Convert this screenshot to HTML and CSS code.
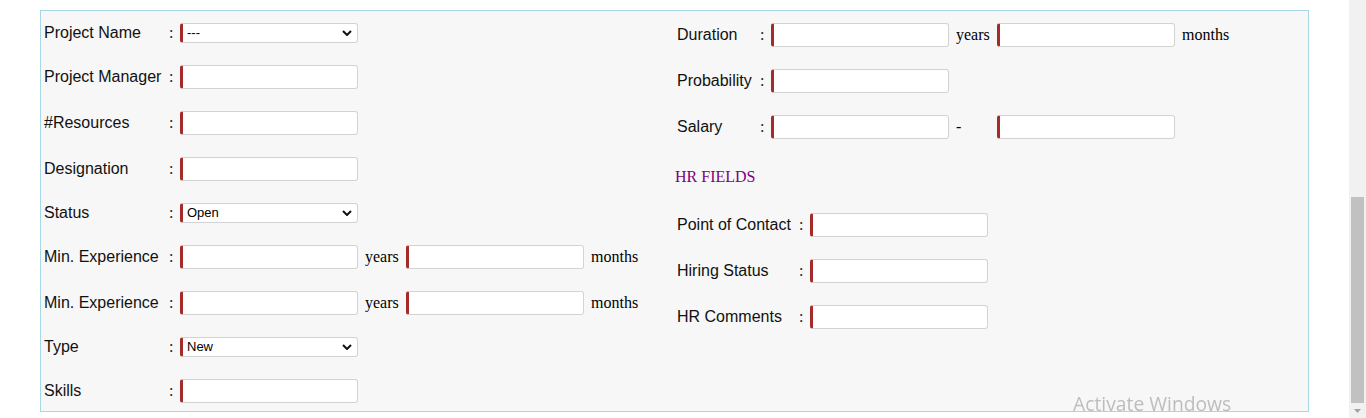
FILE: index.html
```html
<!DOCTYPE html>
<html>
<head>
<meta charset="utf-8">
<link rel="stylesheet" href="styles.css">
</head>
<body>
<div class="panel">
  <div class="col col-left">
    <div class="row r-sel">
      <span class="lbl">Project Name</span><span class="colon">:</span>
      <span class="ctl"><span class="sel-wrap"><select class="sel"><option>---</option></select><svg class="chev" viewBox="0 0 10 6" width="10" height="6"><path d="M1 1 L5 5 L9 1" fill="none" stroke="#111" stroke-width="2"/></svg></span></span>
    </div>
    <div class="row">
      <span class="lbl">Project Manager</span><span class="colon">:</span>
      <span class="ctl"><input class="inp" type="text"></span>
    </div>
    <div class="row">
      <span class="lbl">#Resources</span><span class="colon">:</span>
      <span class="ctl"><input class="inp" type="text"></span>
    </div>
    <div class="row">
      <span class="lbl">Designation</span><span class="colon">:</span>
      <span class="ctl"><input class="inp" type="text"></span>
    </div>
    <div class="row r-sel">
      <span class="lbl">Status</span><span class="colon">:</span>
      <span class="ctl"><span class="sel-wrap"><select class="sel"><option>Open</option></select><svg class="chev" viewBox="0 0 10 6" width="10" height="6"><path d="M1 1 L5 5 L9 1" fill="none" stroke="#111" stroke-width="2"/></svg></span></span>
    </div>
    <div class="row">
      <span class="lbl">Min. Experience</span><span class="colon">:</span>
      <span class="ctl"><input class="inp" type="text"><span class="unit">years</span><input class="inp" type="text"><span class="unit">months</span></span>
    </div>
    <div class="row">
      <span class="lbl">Min. Experience</span><span class="colon">:</span>
      <span class="ctl"><input class="inp" type="text"><span class="unit">years</span><input class="inp" type="text"><span class="unit">months</span></span>
    </div>
    <div class="row r-sel">
      <span class="lbl">Type</span><span class="colon">:</span>
      <span class="ctl"><span class="sel-wrap"><select class="sel"><option>New</option></select><svg class="chev" viewBox="0 0 10 6" width="10" height="6"><path d="M1 1 L5 5 L9 1" fill="none" stroke="#111" stroke-width="2"/></svg></span></span>
    </div>
    <div class="row">
      <span class="lbl">Skills</span><span class="colon">:</span>
      <span class="ctl"><input class="inp" type="text"></span>
    </div>
  </div>
  <div class="col col-right">
    <div class="row rr">
      <span class="lbl">Duration</span><span class="colon">:</span>
      <span class="ctl"><input class="inp" type="text"><span class="unit">years</span><input class="inp" type="text"><span class="unit">months</span></span>
    </div>
    <div class="row rr">
      <span class="lbl">Probability</span><span class="colon">:</span>
      <span class="ctl"><input class="inp" type="text"></span>
    </div>
    <div class="row rr">
      <span class="lbl">Salary</span><span class="colon">:</span>
      <span class="ctl"><input class="inp" type="text"><span class="unit">-</span><input class="inp" type="text"></span>
    </div>
    <div class="hr-title">HR FIELDS</div>
    <div class="row rh">
      <span class="lbl">Point of Contact</span><span class="colon">:</span>
      <span class="ctl"><input class="inp" type="text"></span>
    </div>
    <div class="row rh">
      <span class="lbl">Hiring Status</span><span class="colon">:</span>
      <span class="ctl"><input class="inp" type="text"></span>
    </div>
    <div class="row rh">
      <span class="lbl">HR Comments</span><span class="colon">:</span>
      <span class="ctl"><input class="inp" type="text"></span>
    </div>
  </div>
</div>
<div class="watermark">Activate Windows</div>
<div class="scrollbar">
  <div class="thumb"></div>
  <svg class="sb-arrow" viewBox="0 0 7 4" width="7" height="4"><path d="M0 0 L7 0 L3.5 4 Z" fill="#a3a3a3"/></svg>
</div>
</body>
</html>
```

FILE: styles.css
```css
html, body {
  margin: 0;
  padding: 0;
  background: #ffffff;
  overflow: hidden;
  height: 418px;
}

body {
  font-family: "Liberation Serif", "Times New Roman", serif;
  font-size: 16px;
  color: #000;
}

.panel {
  margin: 10px 0 0 40px;
  width: 1267px;
  height: 399px;
  border: 1px solid #a8d8e8;
  background: #f7f7f7;
  display: flex;
  padding-top: 1px;
  box-sizing: content-box;
}

.col {
  display: flex;
  flex-direction: column;
}

.col-left {
  width: 630px;
  padding-left: 3px;
}

.col-right {
  padding-left: 3px;
}

.row {
  display: grid;
  grid-template-columns: 125px 11px auto;
  align-items: center;
  padding: 11px 0;
}

.row.rr {
  grid-template-columns: 83px 11px auto;
}

.row.rh {
  grid-template-columns: 122px 11px auto;
}

.lbl {
  font-family: "Liberation Sans", Arial, sans-serif;
  font-size: 16px;
  color: #111;
  white-space: nowrap;
}

.colon {
  font-family: "Liberation Serif", "Times New Roman", serif;
  font-size: 16px;
  color: #222;
}

.ctl {
  display: flex;
  align-items: center;
}

.inp {
  box-sizing: border-box;
  width: 178px;
  height: 24px;
  margin: 0;
  padding: 1px 2px;
  background: #fff;
  border: 1px solid #d3d3d3;
  border-left: 3px solid #a52a2a;
  border-radius: 3px;
  font-family: "Liberation Sans", Arial, sans-serif;
  font-size: 13px;
  outline: none;
}

.unit {
  display: inline-block;
  width: 34px;
  margin: 0 7px 0 7px;
  font-family: "Liberation Serif", "Times New Roman", serif;
  font-size: 16px;
  white-space: nowrap;
  line-height: 18px;
}

.sel-wrap {
  position: relative;
  display: inline-block;
  width: 178px;
  height: 20px;
}

.sel {
  appearance: none;
  -webkit-appearance: none;
  box-sizing: border-box;
  width: 178px;
  height: 20px;
  margin: 0;
  padding: 0 0 1px 4px;
  background: #fff;
  border: 1px solid #d3d3d3;
  border-left: 3px solid #a52a2a;
  border-radius: 3px;
  font-family: "Liberation Sans", Arial, sans-serif;
  font-size: 13px;
  color: #000;
  outline: none;
}

.chev {
  position: absolute;
  right: 6px;
  top: 7px;
  pointer-events: none;
}

.hr-title {
  font-family: "Liberation Serif", "Times New Roman", serif;
  font-size: 16px;
  color: #800080;
  margin: 16px 0 15px -2px;
  line-height: 21px;
}

.watermark {
  position: fixed;
  left: 1073px;
  top: 390px;
  font-family: "Open Sans", "Noto Sans", sans-serif;
  font-size: 19.3px;
  color: rgba(150, 150, 150, 0.6);
  white-space: nowrap;
  pointer-events: none;
}

.scrollbar {
  position: fixed;
  top: 0;
  right: 0;
  width: 17px;
  height: 418px;
  background: #f1f1f1;
}

.thumb {
  position: absolute;
  left: 2px;
  width: 13px;
  top: 197px;
  height: 206px;
  background: #c1c1c1;
}

.sb-arrow {
  position: absolute;
  left: 5px;
  top: 409px;
}
```
